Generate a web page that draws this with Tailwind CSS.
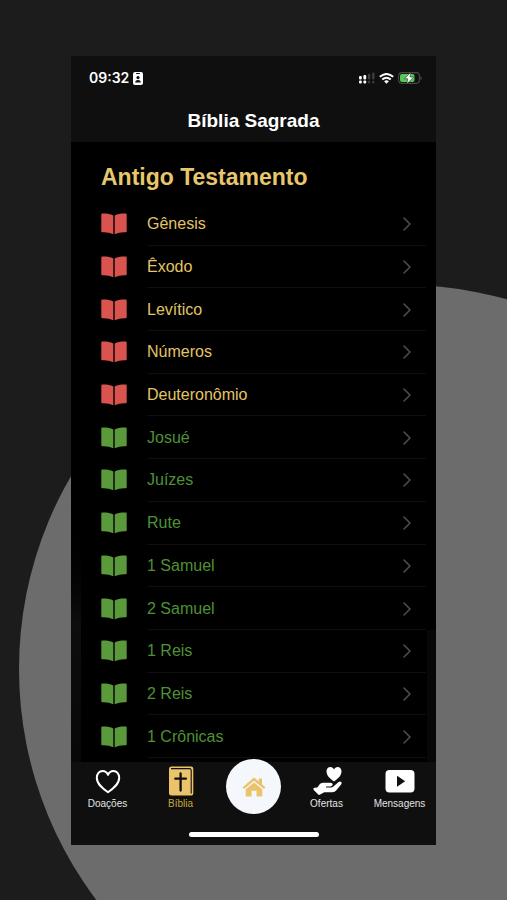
<!DOCTYPE html>
<html lang="pt-BR">
<head>
<meta charset="utf-8">
<meta name="viewport" content="width=device-width, initial-scale=1">
<title>Bíblia Sagrada</title>
<script src="https://cdn.jsdelivr.net/npm/@tailwindcss/browser@4"></script>
</head>
<body class="bg-[#1c1c1c] font-['Liberation_Sans',Arial,sans-serif]">
<svg class="hidden" aria-hidden="true">
  <symbol id="book" viewBox="0 0 26 22">
    <path d="M1.2 .6C5 .3 9 .9 12.3 2.4V21.2C9 19.6 5 18.9 1.2 19.2Q.3 19.2 .3 18.3V1.5Q.3 .7 1.2 .6Z"/>
    <path d="M24.8 .6C21 .3 17 .9 13.7 2.4V21.2C17 19.6 21 18.9 24.8 19.2Q25.7 19.2 25.7 18.3V1.5Q25.7 .7 24.8 .6Z"/>
  </symbol>
  <symbol id="chevron" viewBox="0 0 8 14">
    <path d="M1 1L7 7L1 13" fill="none" stroke="currentColor" stroke-width="1.5" stroke-linecap="round" stroke-linejoin="round"/>
  </symbol>
</svg>
<div class="relative flex min-h-screen flex-col overflow-hidden px-[71px] pt-14 pb-[55px]">
  <div class="absolute top-[285px] left-[19px] size-[768px] rounded-full bg-[#6c6c6c]"></div>
  <div class="relative flex flex-1 flex-col bg-black">
    <header class="flex h-[86px] flex-col bg-[#0f0f0f] text-white">
      <div class="flex h-11 items-center justify-between pr-3.5 pl-[18px]">
        <div class="flex items-center gap-1 font-['Inter',sans-serif] text-sm font-semibold">
          <span>09:32</span>
          <svg class="h-[13px] w-[10px]" viewBox="0 0 10 13">
            <rect width="10" height="13" rx="2" fill="#fff"/>
            <rect x="3" y="1" width="4" height="1" rx=".5" fill="#0f0f0f"/>
            <circle cx="5" cy="5.6" r="1.6" fill="#0f0f0f"/>
            <path d="M2.2 10.6Q2.2 7.9 5 7.9T7.8 10.6Z" fill="#0f0f0f"/>
          </svg>
        </div>
        <div class="flex items-center gap-1">
          <svg class="h-3 w-4" viewBox="0 0 16 12">
            <g fill="#fff"><rect y="4" width="2.8" height="3.4" rx="1"/><rect x="4.4" y="3" width="2.8" height="4.4" rx="1"/><rect y="8.6" width="2.8" height="2.8" rx="1"/><rect x="4.4" y="8.6" width="2.8" height="2.8" rx="1"/></g>
            <g fill="#404040"><rect x="9" y="1.8" width="2.2" height="5.6" rx="1"/><rect x="13.2" y=".6" width="2.2" height="6.8" rx="1"/><rect x="9" y="8.8" width="2.2" height="2.6" rx="1"/><rect x="13.2" y="8.8" width="2.2" height="2.6" rx="1"/></g>
          </svg>
          <svg class="h-[11px] w-[15px]" viewBox="0 0 15 11" fill="none" stroke="#fff" stroke-width="1.9">
            <path d="M.8 3.8Q7.5 -1.9 14.2 3.8"/><path d="M3.2 6.5Q7.5 2.8 11.8 6.5"/>
            <path d="M5.1 8.3Q7.5 6.4 9.9 8.3L7.5 10.8Z" fill="#fff" stroke="none"/>
          </svg>
          <svg class="h-3 w-6" viewBox="0 0 24 12">
            <rect x=".6" y=".6" width="20.8" height="10.8" rx="3.3" fill="none" stroke="#484848" stroke-width="1.1"/>
            <path d="M22.4 4V8Q23.7 7.3 23.7 6T22.4 4Z" fill="#484848"/>
            <rect x="2" y="2" width="14.5" height="8" rx="2" fill="#57c75a"/>
            <path d="M12.8 0L6.6 6.8H9.8L8.8 12L15.7 5H12Z" fill="#fff" stroke="#0f0f0f" stroke-width=".5"/>
          </svg>
        </div>
      </div>
      <h1 class="flex h-[42px] items-center justify-center text-[19px] font-bold">Bíblia Sagrada</h1>
    </header>

    <main class="flex flex-1 flex-col pb-1">
      <h2 class="flex h-[61px] items-center px-[30px] pt-2.5 text-[23px] font-bold text-[#e8c76b]">Antigo Testamento</h2>
      <ul id="books" class="flex flex-1 flex-col pr-2.5 pl-[30px] text-base"></ul>
    </main>

    <nav class="grid h-[83px] grid-cols-5 bg-[#0f0f0f] text-[10px] leading-3 text-[#e4e4e4]">
      <a href="#doacoes" class="flex flex-col items-center pt-1">
        <svg class="size-8" viewBox="0 0 32 32" fill="none" stroke="#fff" stroke-width="2" stroke-linejoin="round"><path d="M16 26.3C11 22.8 4.8 18.3 4.8 11.8C4.8 8 7.3 4.9 10.5 4.9C13 4.9 15 6.3 16 8.8C17 6.3 19 4.9 21.5 4.9C24.7 4.9 27.2 8 27.2 11.8C27.2 18.3 21 22.8 16 26.3Z"/></svg>
        <span>Doações</span>
      </a>
      <a href="#biblia" aria-current="page" class="flex flex-col items-center pt-1 text-[#c9a63c]">
        <svg class="size-8" viewBox="0 0 32 32">
          <path d="M6.5 .5H26Q28.3 .5 28.3 2.8V27.5Q28.3 29.5 26.3 29.5H6.5Q4 29.5 4 27V3Q4 .5 6.5 .5Z" fill="#ebc36a"/>
          <path d="M6 2.6H24.4Q26.2 2.6 26.2 4.4V27.5" fill="none" stroke="#0f0f0f" stroke-width="1.1"/>
          <path d="M15.6 7.5V24.5M10.3 12.7H20.9" stroke="#0f0f0f" stroke-width="2.3" stroke-linecap="round"/>
        </svg>
        <span>Bíblia</span>
      </a>
      <a href="#inicio" aria-label="Início" class="-mt-[3px] flex size-[55px] items-center justify-center justify-self-center rounded-full bg-[#f4f7fc]">
        <svg class="h-5 w-6" viewBox="0 0 24 20" fill="#ebc36a">
          <path d="M12 .5L16.8 4.5V1.5H20V7.3L23.4 10.2L22 11.9L12 3.7L2 11.9L.6 10.2Z"/>
          <path d="M12 5.4L20.3 12.2V19.4H14.5V13.7H9.6V19.4H3.7V12.2Z"/>
        </svg>
      </a>
      <a href="#ofertas" class="flex flex-col items-center pt-1">
        <svg class="size-8" viewBox="0 0 32 32" fill="#fff">
          <path d="M23 15.5C19.5 12.7 15.5 9.8 15.5 5.4C15.5 2.8 17.2 1 19.3 1C21 1 22.4 1.9 23 3.5C23.6 1.9 25 1 26.7 1C28.8 1 30.5 2.8 30.5 5.4C30.5 9.8 26.5 12.7 23 15.5Z"/>
          <path d="M3.5 21.8L6.3 21.4L8.9 18Q10.2 16.7 12.5 16.7H19.5Q21.7 16.9 21.7 18.5T19.5 20.5H15V21.6H20.2Q21.8 21.4 23 20L27.6 15.9Q29.2 15 30.3 16Q31.1 17 30.3 18.3L25.4 24.2Q23.8 26 21.3 26.2H13.3L9.2 28.6Q8 29.4 7 28.3L2.7 24Q1.6 22.4 3.5 21.8Z"/>
        </svg>
        <span>Ofertas</span>
      </a>
      <a href="#mensagens" class="flex flex-col items-center pt-1">
        <svg class="size-8" viewBox="0 0 32 32"><rect x="1.5" y="4" width="29" height="22.5" rx="4" fill="#fff"/><path d="M13 9.8V20.8L21.2 15.3Z" fill="#0f0f0f"/></svg>
        <span>Mensagens</span>
      </a>
    </nav>
    <div class="absolute bottom-2 left-1/2 h-[5px] w-[130px] -translate-x-1/2 rounded-full bg-white"></div>
    <div class="absolute bottom-[83px] left-0 h-[274px] w-2.5 bg-linear-to-b from-black via-[#0e0e0e] to-[#080808]"></div>
    <div class="absolute right-0 bottom-[83px] h-[132px] w-[9px] bg-[#070707]"></div>
  </div>
</div>

<template id="row">
  <li class="flex flex-1">
    <a href="#livro" class="flex flex-1 items-stretch gap-5">
      <svg class="h-[22px] w-[26px] self-center fill-current"><use href="#book"/></svg>
      <span class="flex flex-1 items-center justify-between border-b border-[#0f0f0f] pt-px pr-[15px]">
        <span></span>
        <svg class="h-3.5 w-2 text-[#505050]"><use href="#chevron"/></svg>
      </span>
    </a>
  </li>
</template>
<script>
  const books = ['Gênesis', 'Êxodo', 'Levítico', 'Números', 'Deuteronômio', 'Josué', 'Juízes', 'Rute', '1 Samuel', '2 Samuel', '1 Reis', '2 Reis', '1 Crônicas'];
  const list = document.getElementById('books');
  books.forEach((name, i) => {
    const row = document.getElementById('row').content.cloneNode(true);
    const law = i < 5;
    row.querySelector('svg').classList.add(law ? 'text-[#d9534f]' : 'text-[#5b9a3c]');
    const label = row.querySelector('span > span');
    label.textContent = name;
    label.classList.add(law ? 'text-[#e3c466]' : 'text-[#4f9136]');
    list.append(row);
  });
</script>
</body>
</html>
